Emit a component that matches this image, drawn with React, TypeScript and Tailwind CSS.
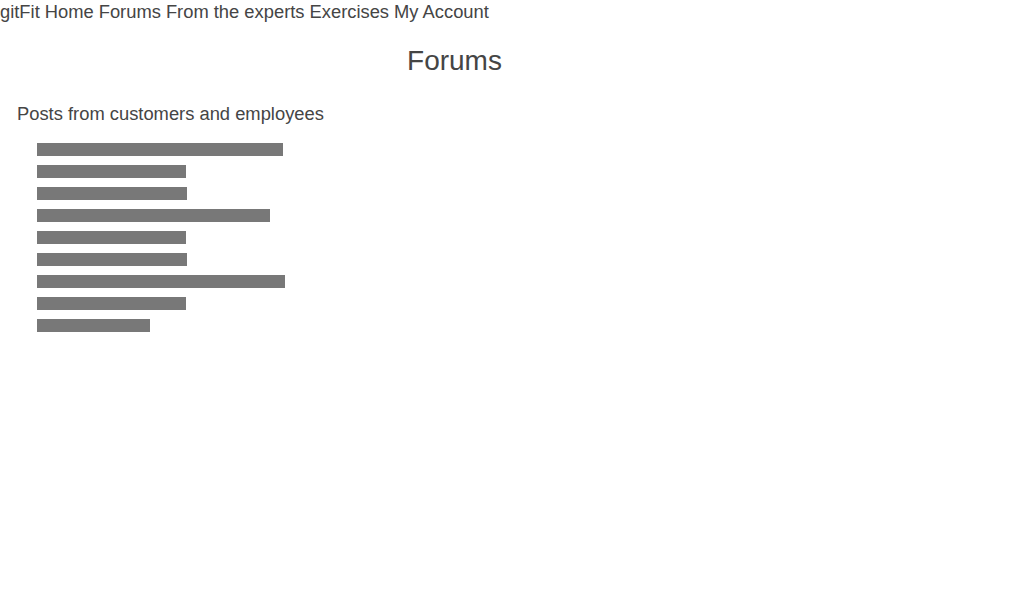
export default function App() {
  const bars = [246, 149, 150, 233, 149, 150, 248, 149, 113];
  return (
    <div className="w-[1024px] h-[600px] bg-white text-[#454545]" style={{ fontFamily: '"Liberation Sans", Arial, sans-serif' }}>
      <nav className="flex gap-[5px] text-[18.35px] leading-[22px] pt-[1px]">
        <span>gitFit</span>
        <span>Home</span>
        <span>Forums</span>
        <span>From the experts</span>
        <span>Exercises</span>
        <span>My Account</span>
      </nav>
      <h1 className="w-[909px] text-center text-[28px] leading-[32px] mt-[22px]">Forums</h1>
      <p className="ml-[17px] mt-[26px] text-[18.35px] leading-[21px]">Posts from customers and employees</p>
      <ul className="ml-[37px] mt-[19px] flex flex-col gap-[9px]">
        {bars.map((w, i) => (
          <li key={i} className="h-[13px] bg-[#787878]" style={{ width: w }} />
        ))}
      </ul>
    </div>
  );
}
